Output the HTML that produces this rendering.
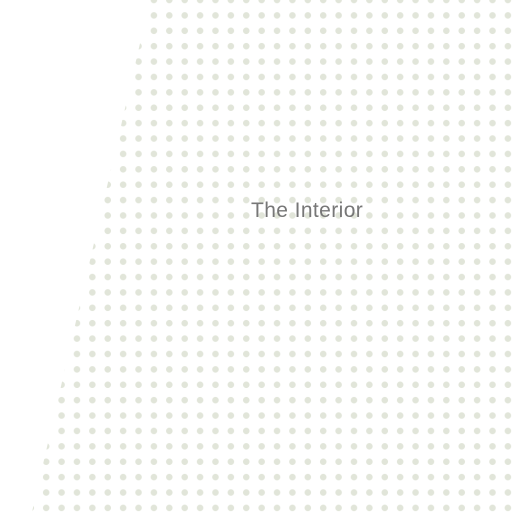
<!DOCTYPE html>
<html><head><meta charset="utf-8"><style>
html,body{margin:0;padding:0;width:512px;height:512px;overflow:hidden;background:#fff;}
.dots{position:absolute;left:0;top:0;width:512px;height:512px;
background-image:radial-gradient(circle at center,#e1e5d9 0,#e1e5d9 3px,rgba(255,255,255,0) 3.5px);
background-size:15.4px 15.4px;background-position:-7.7px -7.7px;
clip-path:polygon(150px 0,512px 0,512px 512px,32px 512px);}
.t{position:absolute;left:251px;top:199px;font-family:"Liberation Sans",sans-serif;font-size:21px;color:#777;letter-spacing:0.4px;white-space:nowrap;}
</style></head><body>
<div class="dots"></div>
<div class="t">The Interior</div>
</body></html>
